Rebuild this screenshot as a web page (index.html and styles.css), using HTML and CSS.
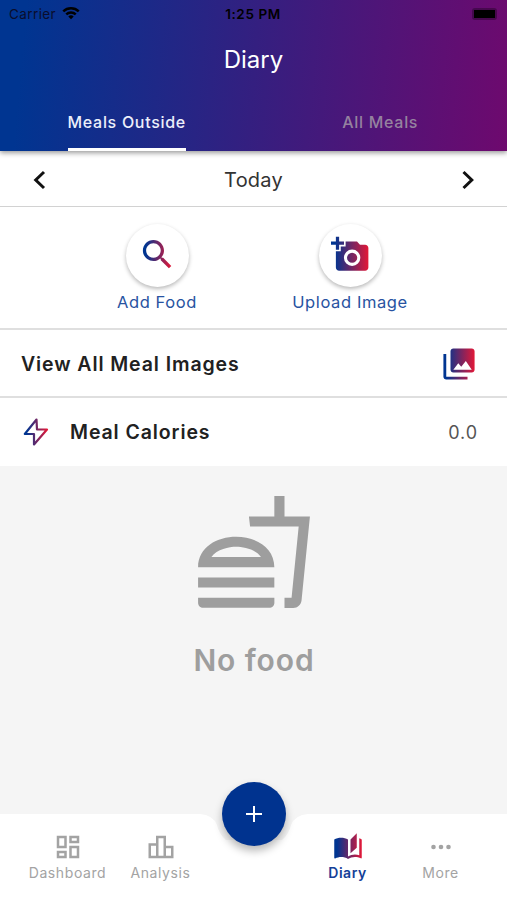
FILE: index.html
```html
<!DOCTYPE html>
<html lang="en">
<head>
  <meta charset="UTF-8">
  <meta name="viewport" content="width=device-width, initial-scale=1.0">
  <title>Diary</title>
  <link rel="stylesheet" href="styles.css">
</head>
<body>
  <svg class="defs" width="0" height="0">
    <defs>
      <linearGradient id="brand" x1="0" y1="0" x2="1" y2="0">
        <stop offset="0.1" stop-color="#003591"/>
        <stop offset="1" stop-color="#e31837"/>
      </linearGradient>
    </defs>
  </svg>

  <header>
    <div class="status-bar">
      <div class="carrier">
        Carrier
        <svg width="18" height="14" viewBox="0 0 18 14"><path d="M9 13.2 6.3 10.4a4 4 0 0 1 5.4 0zM3.4 7.5a8.2 8.2 0 0 1 11.2 0l-1.7 1.8a5.8 5.8 0 0 0-7.8 0zM.4 4.4a12.6 12.6 0 0 1 17.2 0l-1.7 1.8a10.2 10.2 0 0 0-13.8 0z"/></svg>
      </div>
      <div class="time">1:25 PM</div>
      <div class="battery"><span></span></div>
    </div>
    <h1>Diary</h1>
    <div class="tabs">
      <div class="tab active"><span>Meals Outside</span></div>
      <div class="tab"><span>All Meals</span></div>
    </div>
  </header>

  <div class="date-row">
    <svg width="32" height="32" viewBox="0 0 32 32"><path d="M21 8l-8.3 8 8.3 8"/></svg>
    <div class="date">Today</div>
    <svg width="32" height="32" viewBox="0 0 32 32"><path d="M11.5 8l8.3 8-8.3 8"/></svg>
  </div>

  <div class="actions">
    <div class="action">
      <div class="round">
        <svg width="39" height="39" viewBox="0 0 24 24"><path fill="url(#brand)" d="M15.5 14h-.79l-.28-.27C15.41 12.59 16 11.11 16 9.5 16 5.91 13.09 3 9.5 3S3 5.91 3 9.5 5.91 16 9.5 16c1.61 0 3.09-.59 4.23-1.57l.27.28v.79l5 4.99L20.49 19l-4.99-5zm-6 0C7.01 14 5 11.99 5 9.5S7.01 5 9.5 5 14 7.01 14 9.5 11.99 14 9.5 14z"/></svg>
      </div>
      Add Food
    </div>
    <div class="action">
      <div class="round">
        <svg width="39" height="39" viewBox="0 0 24 24"><path fill="url(#brand)" d="M3 4V1h2v3h3v2H5v3H3V6H0V4h3zm3 6V7h3V4h7l1.83 2H21c1.1 0 2 .9 2 2v12c0 1.1-.9 2-2 2H5c-1.1 0-2-.9-2-2V10h3z"/><circle cx="13" cy="14" r="4.1" fill="none" stroke="#fff" stroke-width="1.9"/></svg>
      </div>
      Upload Image
    </div>
  </div>

  <div class="row images">
    <h2>View All Meal Images</h2>
    <svg width="34" height="34" viewBox="0 0 24 24"><path fill="url(#brand)" d="M23 16V3c0-1.1-.9-2-2-2H8c-1.1 0-2 .9-2 2v13c0 1.1.9 2 2 2h13c1.1 0 2-.9 2-2zM8 16l3.5-4.5 2.1 2.5 3.2-4.2L21 16zM1 5v16c0 1.1.9 2 2 2h15v-2H3V5H1z"/></svg>
  </div>

  <div class="row calories">
    <svg width="26" height="28" viewBox="0 0 26 28"><path fill="none" stroke="url(#brand)" stroke-width="2.2" stroke-linejoin="round" d="M13.5 1.5 1.8 16H11v10.5L24 11.5H14z"/></svg>
    <h2>Meal Calories</h2>
    <span class="value">0.0</span>
  </div>

  <main>
    <svg width="122" height="122" viewBox="0 0 24 24"><path fill="#9e9e9e" d="M1 21.98c0 .56.45 1.01 1.01 1.01H15c.56 0 1.01-.45 1.01-1.01V21H1v.98zM8.5 8.99C4.75 8.99 1 11 1 15h15c0-4-3.75-6.01-7.5-6.01zM3.62 13c1.11-1.55 3.47-2.01 4.88-2.01s3.77.46 4.88 2.01H3.62zM1 17h15v2H1v-2zM18 5V1h-2v4h-5l.23 2h9.56l-1.4 14H18v2h1.72c.84 0 1.53-.65 1.63-1.47L23 5h-5z"/></svg>
    <p>No food</p>
  </main>

  <nav>
    <svg class="nav-bg" width="507" height="86" viewBox="0 0 507 86"><path fill="#fff" d="M0 0H200Q213 1 217 11Q219 20 226 26H282Q289 20 291 11Q295 1 308 0H507V86H0z"/></svg>
    <div class="nav-item">
      <svg width="30" height="30" viewBox="0 0 24 24"><path fill="currentColor" d="M19 5v2h-4V5h4M9 5v6H5V5h4m10 8v6h-4v-6h4M9 17v2H5v-2h4M21 3h-8v6h8V3zM11 3H3v10h8V3zm10 8h-8v10h8V11zm-10 4H3v6h8v-6z"/></svg>
      Dashboard
    </div>
    <div class="nav-item">
      <svg width="30" height="30" viewBox="0 0 24 24"><path fill="currentColor" d="M16 11V3H8v6H2v12h20V11h-6zm-6-6h4v14h-4V5zm-6 6h4v8H4v-8zm16 8h-4v-6h4v6z"/></svg>
      Analysis
    </div>
    <div class="add-slot">
      <button class="add">
        <svg width="18" height="18" viewBox="0 0 18 18"><path stroke="#fff" stroke-width="2" d="M9 1v16M1 9h16"/></svg>
      </button>
    </div>
    <div class="nav-item active">
      <svg width="30" height="30" viewBox="0 0 24 24"><path fill="url(#brand)" d="M19 1l-5 5v11l5-4.5V1zM1 6v14.65c0 .25.25.5.5.5.1 0 .15-.05.25-.05C3.1 20.45 5.05 20 6.5 20c1.95 0 4.05.4 5.5 1.5V6c-1.45-1.1-3.55-1.5-5.5-1.5S2.45 4.9 1 6zM23 19.5V6c-.6-.45-1.25-.75-2-1v13.5c-1.1-.35-2.3-.5-3.5-.5-1.7 0-4.15.65-5.5 1.5v2c1.35-.85 3.8-1.5 5.5-1.5 1.65 0 3.35.3 4.75 1.05.1.05.15.05.25.05.25 0 .5-.25.5-.5v-1.1z"/></svg>
      Diary
    </div>
    <div class="nav-item">
      <svg width="30" height="30" viewBox="0 0 30 30"><g fill="currentColor"><circle cx="7.5" cy="15" r="2.3"/><circle cx="15" cy="15" r="2.3"/><circle cx="22.5" cy="15" r="2.3"/></g></svg>
      More
    </div>
  </nav>
</body>
</html>
```
FILE: styles.css
```css
* {
  box-sizing: border-box;
}
body {
  margin: 0;
  height: 900px;
  display: flex;
  flex-direction: column;
  background-color: #fff;
  font-family: Inter, "Liberation Sans", sans-serif;
  color: #212121;
  overflow: hidden;
}
h1, h2, p {
  margin: 0;
}
svg {
  display: block;
}
.defs {
  position: absolute;
}
header {
  height: 151px;
  flex: none;
  display: flex;
  flex-direction: column;
  background: linear-gradient(95deg, #003591 5%, #341f80 50%, #6e096e 100%);
  box-shadow: 0 2px 5px rgba(0, 0, 0, 0.4);
  color: #fff;
}
.status-bar {
  height: 28px;
  padding: 0 10px 0 9px;
  display: grid;
  grid-template-columns: 1fr auto 1fr;
  align-items: center;
  font-size: 13.5px;
  color: #000;
}
.carrier {
  display: flex;
  align-items: center;
  gap: 6px;
  letter-spacing: 0.4px;
  color: #0a0d2c;
}
.carrier svg {
  margin-top: -3px;
}
.time {
  font-weight: 600;
  letter-spacing: 0.6px;
}
.battery {
  justify-self: end;
  width: 25px;
  height: 12px;
  padding: 2px;
  border-radius: 3px;
  background-color: rgba(0, 0, 0, 0.3);
}
.battery span {
  display: block;
  height: 8px;
  background-color: #000;
}
h1 {
  margin-top: 16px;
  line-height: 32px;
  text-align: center;
  font-size: 24px;
  font-weight: 400;
}
.tabs {
  flex: 1;
  display: grid;
  grid-template-columns: 1fr 1fr;
  padding-top: 17px;
}
.tab {
  display: flex;
  justify-content: center;
  font-size: 16px;
  font-weight: 500;
  letter-spacing: 0.7px;
  color: #95829f;
}
.tab span {
  height: 58px;
  line-height: 58px;
}
.tab.active {
  color: #eceffa;
}
.tab.active span {
  border-bottom: 3px solid #fff;
  border-radius: 3px 3px 0 0;
}
.date-row {
  height: 56px;
  flex: none;
  display: flex;
  align-items: center;
  justify-content: space-between;
  padding: 3px 23px 0;
  border-bottom: 1px solid #d2d2d2;
}
.date-row path {
  fill: none;
  stroke: #111;
  stroke-width: 3;
}
.date {
  font-size: 20px;
  letter-spacing: 0.2px;
  color: #333;
}
.actions {
  height: 123px;
  flex: none;
  display: flex;
  justify-content: center;
  gap: 62px;
  padding-top: 17px;
  border-bottom: 2px solid #dfdfdf;
}
.action {
  width: 131px;
  display: flex;
  flex-direction: column;
  align-items: center;
  gap: 4px;
  font-size: 16.5px;
  line-height: 22px;
  letter-spacing: 0.6px;
  color: #2853a1;
}
.round {
  width: 63px;
  height: 63px;
  padding-bottom: 2px;
  display: flex;
  align-items: center;
  justify-content: center;
  border-radius: 50%;
  background-color: #fff;
  box-shadow: 0 2px 4px rgba(0, 0, 0, 0.28);
}
.row {
  height: 68px;
  flex: none;
  display: flex;
  align-items: center;
}
h2 {
  font-size: 19.5px;
  font-weight: 600;
  letter-spacing: 0.9px;
}
.images {
  justify-content: space-between;
  padding: 2px 31px 0 21px;
  border-bottom: 2px solid #dfdfdf;
}
.calories {
  padding: 0 29px 0 23px;
}
.calories h2 {
  margin-left: 21px;
}
.value {
  margin-left: auto;
  font-size: 18px;
  letter-spacing: 0.9px;
  color: #555;
}
main {
  flex: 1;
  display: flex;
  flex-direction: column;
  align-items: center;
  padding-top: 25px;
  background-color: #f5f5f5;
}
main p {
  margin-top: 27px;
  padding-left: 1px;
  font-size: 30px;
  line-height: 40px;
  font-weight: 600;
  letter-spacing: 0.9px;
  color: #9e9e9e;
}
nav {
  height: 86px;
  flex: none;
  position: relative;
  display: grid;
  grid-template-columns: repeat(2, 93px) 94px repeat(2, 93px);
  justify-content: center;
  background-color: #f5f5f5;
}
.nav-bg {
  position: absolute;
  top: 0;
  left: 0;
}
.nav-item {
  position: relative;
  display: flex;
  flex-direction: column;
  align-items: center;
  padding-top: 18px;
  padding-left: 1px;
  font-size: 14px;
  line-height: 21px;
  letter-spacing: 0.6px;
  color: #a3a3a3;
}
.nav-item.active {
  font-weight: 600;
  letter-spacing: 0.5px;
  color: #143f98;
}
.add-slot {
  position: relative;
  display: flex;
  justify-content: center;
}
.add {
  width: 64px;
  height: 64px;
  margin-top: -32px;
  padding: 0;
  display: flex;
  align-items: center;
  justify-content: center;
  border: none;
  border-radius: 50%;
  background-color: #00338f;
  box-shadow: 0 5px 9px rgba(0, 0, 0, 0.28);
}
```
